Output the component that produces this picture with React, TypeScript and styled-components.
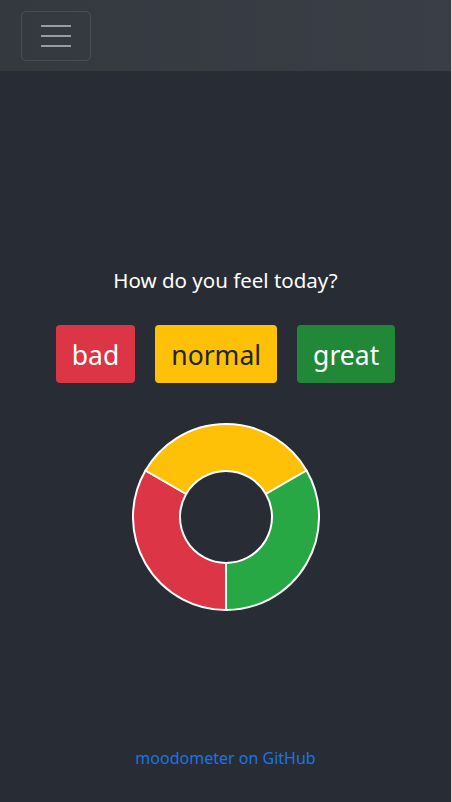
import React from "react";
import styled, { createGlobalStyle } from "styled-components";

const Global = createGlobalStyle`
  html, body { margin: 0; padding: 0; background: #282c34; }
  body { font-family: "Segoe UI", "Noto Sans", "Open Sans", sans-serif; }
  * { box-sizing: border-box; }
`;

const Page = styled.div`
  min-height: 802px;
  display: flex;
  flex-direction: column;
  background: #282c34;
  border-right: 1px solid #d8d8d8;
`;

const Navbar = styled.nav`
  height: 71px;
  background: linear-gradient(to right, #343940, #3a3e46);
  display: flex;
  align-items: center;
  padding: 0 21px;
`;

const Toggler = styled.button`
  width: 70px;
  height: 50px;
  border: 1px solid rgba(255, 255, 255, 0.1);
  border-radius: 5px;
  background: transparent;
  display: flex;
  flex-direction: column;
  align-items: center;
  justify-content: center;
  gap: 8px;
  padding: 0;
  margin-top: 1px;
`;

const Bar = styled.span`
  display: block;
  width: 30px;
  height: 2px;
  background: rgba(255, 255, 255, 0.5);
`;

const Main = styled.main`
  flex: 1;
  display: flex;
  flex-direction: column;
  align-items: center;
  padding-top: 194px;
`;

const Title = styled.h2`
  margin: 0;
  font-size: 20.5px;
  line-height: 30px;
  font-weight: 400;
  color: #ffffff;
`;

const Buttons = styled.div`
  display: flex;
  gap: 20px;
  margin-top: 30px;
`;

const MoodButton = styled.button<{ $bg: string; $fg: string }>`
  font-family: inherit;
  font-size: 26.5px;
  line-height: 42px;
  padding: 9px 16px 7px;
  border: none;
  border-radius: 4px;
  background: ${(p) => p.$bg};
  color: ${(p) => p.$fg};
  cursor: pointer;
`;

const Chart = styled.svg`
  margin-top: 40px;
  display: block;
`;

const Footer = styled.footer`
  display: flex;
  justify-content: center;
  padding-bottom: 32px;
`;

const Link = styled.a`
  font-size: 16px;
  line-height: 24px;
  color: #1b74e4;
  text-decoration: none;
`;

const cx = 94;
const cy = 94;
const R = 93;
const r = 46;

function pt(rad: number, a: number) {
  const t = (a * Math.PI) / 180;
  return [cx + rad * Math.cos(t), cy + rad * Math.sin(t)];
}

function arc(a0: number, a1: number) {
  const [x0, y0] = pt(R, a0);
  const [x1, y1] = pt(R, a1);
  const [x2, y2] = pt(r, a1);
  const [x3, y3] = pt(r, a0);
  return `M${x0} ${y0} A${R} ${R} 0 0 1 ${x1} ${y1} L${x2} ${y2} A${r} ${r} 0 0 0 ${x3} ${y3} Z`;
}

const segments = [
  { a0: 90, a1: 210, color: "#dc3545" },
  { a0: 210, a1: 330, color: "#ffc107" },
  { a0: 330, a1: 450, color: "#28a745" },
];

export default function App() {
  return (
    <Page>
      <Global />
      <Navbar>
        <Toggler aria-label="menu">
          <Bar />
          <Bar />
          <Bar />
        </Toggler>
      </Navbar>
      <Main>
        <Title>How do you feel today?</Title>
        <Buttons>
          <MoodButton $bg="#dc3545" $fg="#ffffff">bad</MoodButton>
          <MoodButton $bg="#ffc107" $fg="#212529">normal</MoodButton>
          <MoodButton $bg="#218838" $fg="#ffffff">great</MoodButton>
        </Buttons>
        <Chart width={188} height={188} viewBox="0 0 188 188">
          {segments.map((s) => (
            <path key={s.a0} d={arc(s.a0, s.a1)} fill={s.color} stroke="#ffffff" strokeWidth={2} strokeLinejoin="round" />
          ))}
        </Chart>
      </Main>
      <Footer>
        <Link href="#">moodometer on GitHub</Link>
      </Footer>
    </Page>
  );
}
